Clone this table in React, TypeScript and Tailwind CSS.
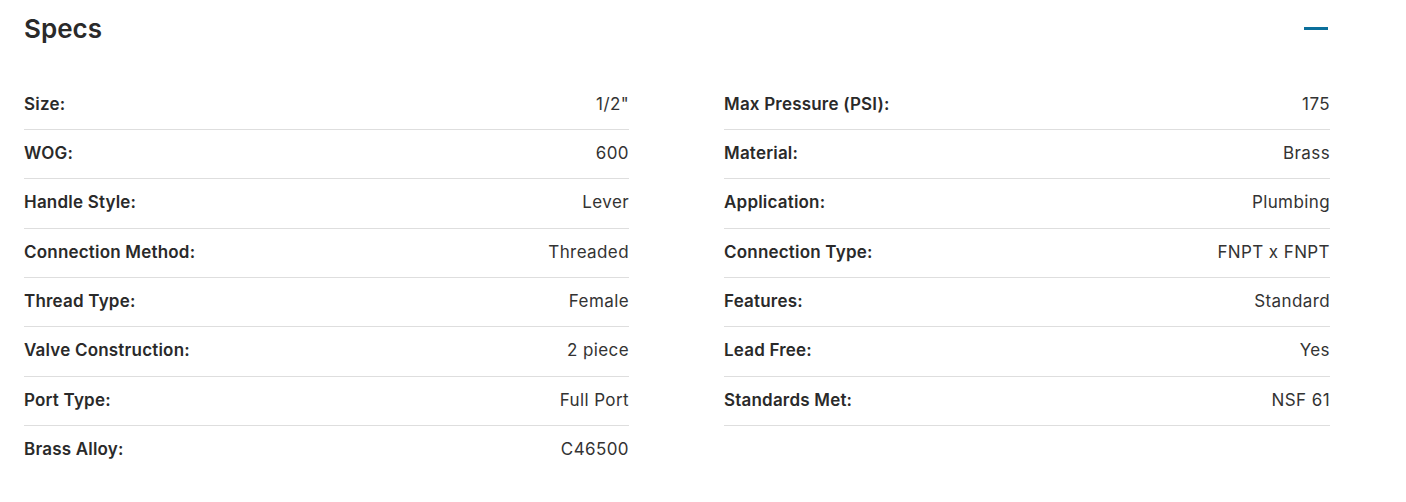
import React from "react";

const left: [string, string][] = [
  ["Size:", '1/2"'],
  ["WOG:", "600"],
  ["Handle Style:", "Lever"],
  ["Connection Method:", "Threaded"],
  ["Thread Type:", "Female"],
  ["Valve Construction:", "2 piece"],
  ["Port Type:", "Full Port"],
  ["Brass Alloy:", "C46500"],
];

const right: [string, string][] = [
  ["Max Pressure (PSI):", "175"],
  ["Material:", "Brass"],
  ["Application:", "Plumbing"],
  ["Connection Type:", "FNPT x FNPT"],
  ["Features:", "Standard"],
  ["Lead Free:", "Yes"],
  ["Standards Met:", "NSF 61"],
];

function Column({ rows, lastBorder }: { rows: [string, string][]; lastBorder: boolean }) {
  return (
    <div className="flex flex-col">
      {rows.map(([k, v], i) => (
        <div
          key={k}
          className={`flex justify-between items-center pt-[11px] pb-[13.33px] text-[17px] leading-6 ${
            i < rows.length - 1 || lastBorder ? "border-b border-[#dedede]" : ""
          }`}
        >
          <span className="font-semibold text-[#2a2a2a] tracking-[0.2px]">{k}</span>
          <span className="text-[#333333] tracking-[0.4px]">{v}</span>
        </div>
      ))}
    </div>
  );
}

export default function App() {
  return (
    <div
      className="w-[1406px] h-[502px] bg-white px-6"
      style={{ fontFamily: "Inter, 'Liberation Sans', sans-serif" }}
    >
      <div className="w-[1306px]">
        <div className="flex justify-between items-center pt-[13px]">
          <h2 className="text-[26px] leading-8 font-semibold text-[#2a2a2a]">Specs</h2>
          <div className="w-[24px] h-[3px] bg-[#0b6f9b] mr-[2px] -translate-y-[1px]" />
        </div>
        <div className="grid grid-cols-[605px_606px] gap-x-[95px] mt-[35.6px]">
          <Column rows={left} lastBorder={false} />
          <Column rows={right} lastBorder={true} />
        </div>
      </div>
    </div>
  );
}
